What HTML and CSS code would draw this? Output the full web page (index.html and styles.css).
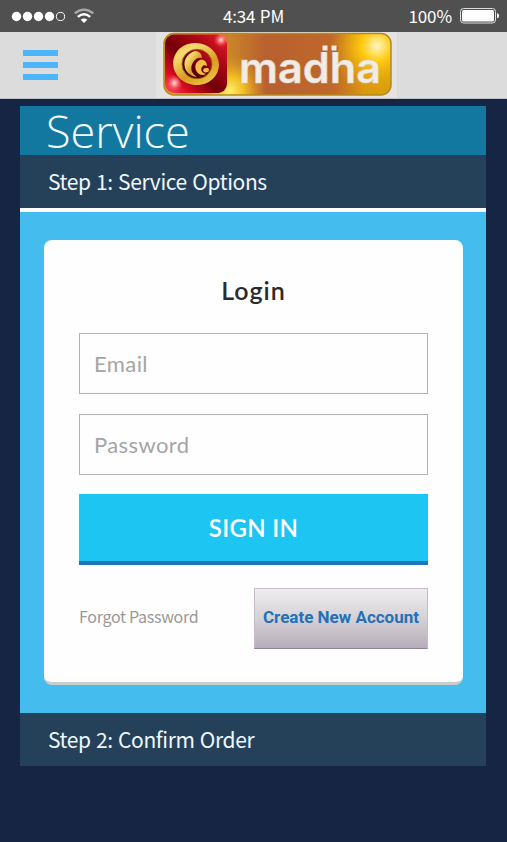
FILE: index.html
```html
<!DOCTYPE html>
<html lang="en">
<head>
    <meta charset="utf-8">
    <title>Service</title>
    <link rel="stylesheet" href="styles.css">
</head>
<body>
    <!-- status bar -->
    <div class="status">
        <svg class="signal" width="96" height="32" viewBox="0 0 96 32">
            <g fill="#fff">
                <circle cx="16.5" cy="16.5" r="4.7"/>
                <circle cx="27.5" cy="16.5" r="4.7"/>
                <circle cx="38.5" cy="16.5" r="4.7"/>
                <circle cx="49.5" cy="16.5" r="4.7"/>
            </g>
            <circle cx="60.5" cy="16.5" r="4.1" fill="none" stroke="#fff" stroke-width="1"/>
            <path d="M74.7 13.4Q84 5.8 93.3 13.4" fill="none" stroke="#aaa" stroke-width="2.2"/>
            <path d="M77.8 16.9Q84 11.7 90.2 16.9" fill="none" stroke="#fff" stroke-width="2.3"/>
            <path d="M80.7 19.8Q84 17.4 87.3 19.8L84 23Z" fill="#fff"/>
        </svg>
        <span class="time">4:34 PM</span>
        <div class="battery">
            <span>100%</span>
            <svg width="40" height="16" viewBox="0 0 40 16">
                <rect x=".5" y=".5" width="35" height="14.5" rx="3" fill="none" stroke="#ddd"/>
                <rect x="2" y="2" width="32" height="11.5" rx="1.5" fill="#fff"/>
                <path d="M37 5.2Q39.2 5.4 39.2 7.7T37 10.3Z" fill="#fff"/>
            </svg>
        </div>
    </div>

    <header class="topbar">
        <button class="menu" type="button" aria-label="Menu"><i></i><i></i><i></i></button>
        <svg class="logo" width="241" height="66" viewBox="156 32 241 66">
            <defs>
                <linearGradient id="plate" x1="0" y1="0" x2="1" y2="0">
                    <stop offset="0" stop-color="#e0a818"/>
                    <stop offset=".3" stop-color="#c98228"/>
                    <stop offset=".45" stop-color="#b8602f"/>
                    <stop offset=".75" stop-color="#bf682a"/>
                    <stop offset=".88" stop-color="#db9712"/>
                    <stop offset="1" stop-color="#d9a10a"/>
                </linearGradient>
                <radialGradient id="shine" cx="377" cy="46" r="48" gradientUnits="userSpaceOnUse">
                    <stop offset="0" stop-color="#fff6c0"/>
                    <stop offset=".32" stop-color="#ffca10"/>
                    <stop offset="1" stop-color="#e09a10" stop-opacity="0"/>
                </radialGradient>
                <radialGradient id="glow" cx="229" cy="91" r="38" gradientUnits="userSpaceOnUse">
                    <stop offset="0" stop-color="#fff06a"/>
                    <stop offset=".4" stop-color="#f1bd22"/>
                    <stop offset="1" stop-color="#d08826" stop-opacity="0"/>
                </radialGradient>
                <linearGradient id="red" x1="0" y1="1" x2="1" y2="0">
                    <stop offset="0" stop-color="#f9506a"/>
                    <stop offset=".2" stop-color="#d80b24"/>
                    <stop offset=".45" stop-color="#720008"/>
                    <stop offset=".7" stop-color="#a80714"/>
                    <stop offset=".92" stop-color="#d81624"/>
                    <stop offset="1" stop-color="#ffc0b8"/>
                </linearGradient>
                <linearGradient id="gold" x1="0" y1="0" x2="1" y2="1">
                    <stop offset="0" stop-color="#e5b63c"/>
                    <stop offset=".25" stop-color="#f6dc70"/>
                    <stop offset=".6" stop-color="#d99b20"/>
                    <stop offset="1" stop-color="#f5d650"/>
                </linearGradient>
                <linearGradient id="core" x1="0" y1="1" x2="1" y2="0">
                    <stop offset="0" stop-color="#380004"/>
                    <stop offset=".5" stop-color="#6e0008"/>
                    <stop offset="1" stop-color="#dc1424"/>
                </linearGradient>
                <radialGradient id="spot">
                    <stop offset="0" stop-color="#ffe8e4"/>
                    <stop offset=".3" stop-color="#ff9c9c" stop-opacity=".8"/>
                    <stop offset="1" stop-color="#f22" stop-opacity="0"/>
                </radialGradient>
            </defs>
            <rect x="156" y="32" width="241" height="66" fill="#e4e3e2"/>
            <rect x="164" y="33.5" width="227" height="61.5" rx="10" fill="url(#plate)"/>
            <rect x="164" y="33.5" width="227" height="61.5" rx="10" fill="url(#glow)"/>
            <rect x="164" y="33.5" width="227" height="61.5" rx="10" fill="url(#shine)"/>
            <rect x="164" y="33.5" width="227" height="61.5" rx="10" fill="none" stroke="#b28a1e" stroke-width="1.5"/>
            <rect x="165" y="34.5" width="62" height="58.5" rx="9" fill="url(#red)"/>
            <circle cx="221" cy="40" r="8" fill="url(#spot)"/>
            <path d="M165 73Q171 73 178 78Q183 84 184 93H174Q165 93 165 84Z" fill="url(#spot)"/>
            <ellipse cx="196" cy="64" rx="23" ry="21" fill="url(#gold)" transform="rotate(12 196 64)"/>
            <ellipse cx="197" cy="64" rx="15" ry="14.7" fill="url(#core)" stroke="#9c6413" stroke-width=".8"/>
            <path d="M195 51C188 53 184 59 184.500 65C185 72 190 76 197 77C190 73 190 66 194 61C196 58 199 57 202 58C202 54 199 51 195 51Z" fill="url(#gold)"/>
            <path d="M200 60C195 62 194 68 197 72C199 75 203 76 206 74C202 73 200 70 202 67C203 65 205 65 207 66C207 62 204 59 200 60ZM206 68C203 68 202 71 205 72.500L208 72Q210 70 208 68Z" fill="#f1bc48"/>
            <text class="logo-text" x="239" y="82.5" textLength="142" lengthAdjust="spacingAndGlyphs">madha</text>
            <!-- dots over the d and h stems -->
            <path d="M320 47h18v5h-18z" fill="#b8652e"/>
            <path d="M322.500 45.500h5v5h-5zM331.500 45.500h5v5h-5z" fill="#f1ece6"/>
        </svg>
    </header>

    <main class="panel">
        <h1>Service</h1>
        <h2>Step 1: Service Options</h2>
        <div class="content">
            <form class="login">
                <h3>Login</h3>
                <input type="text" placeholder="Email">
                <input type="password" placeholder="Password">
                <button class="signin" type="button">SIGN IN</button>
                <div class="links">
                    <a class="forgot">Forgot Password</a>
                    <button class="create" type="button">Create New Account</button>
                </div>
            </form>
        </div>
        <h2 class="last">Step 2: Confirm Order</h2>
    </main>
</body>
</html>
```
FILE: styles.css
```css
* {
    box-sizing: border-box;
}

body {
    margin: 0;
    height: 842px;
    background: #162544;
    font-family: "Noto Sans CJK SC", sans-serif;
    overflow: hidden;
}

h1, h2, h3 {
    margin: 0;
    font-weight: 400;
}

button {
    border: 0;
    padding: 0;
}

.status {
    display: grid;
    grid-template-columns: 1fr auto 1fr;
    align-items: center;
    height: 32px;
    background: #505050;
    color: #fff;
}

.time {
    font-size: 17px;
    line-height: 30px;
    word-spacing: 1px;
    letter-spacing: -.2px;
}

.battery {
    display: flex;
    justify-content: flex-end;
    align-items: center;
    gap: 8px;
    padding-right: 7px;
    font-size: 17px;
    line-height: 32px;
    letter-spacing: -.1px;
}

.topbar {
    display: flex;
    height: 67px;
    padding-left: 23px;
    background: #dcdcdc;
    border-bottom: 1px solid #bfc0c3;
}

.menu {
    display: flex;
    flex-direction: column;
    gap: 6px;
    width: 35px;
    margin: 18px 98px 0 0;
    background: none;
}

.menu i {
    width: 35px;
    height: 6px;
    background: #4db5fa;
}

.logo-text {
    font: 600 42px Inter, sans-serif;
    fill: #f1ece6;
    stroke: #e0d6ca;
    stroke-width: .6px;
}

.panel {
    margin: 7px 21px 0 20px;
}

.panel h1 {
    height: 49px;
    padding-left: 26px;
    background: #12789f;
    color: #f2fbff;
    font: 300 45px/50px "Open Sans", sans-serif;
}

.panel h2 {
    height: 53px;
    padding-left: 28px;
    background: #244159;
    color: #f0f8ff;
    font-size: 21px;
    line-height: 52px;
    word-spacing: 1px;
    letter-spacing: -.38px;
}

.content {
    height: 505px;
    padding: 28px 23px 0 24px;
    border-top: 4px solid #fff;
    background: #45bcee;
}

.login {
    height: 445px;
    padding: 32px 35px 0;
    border-bottom: 3px solid #c9cdd0;
    border-radius: 8px;
    background: #fefefe;
}

.login h3 {
    height: 61px;
    color: #2b2b2b;
    font: 600 25px/37px Lato, sans-serif;
    letter-spacing: 1px;
    text-align: center;
}

.login input {
    display: block;
    width: 100%;
    height: 61px;
    margin-bottom: 20px;
    padding: 0 14px;
    border: 1px solid #b3b3b3;
    border-radius: 0;
    background: #fefefe;
    font: 22px Lato, sans-serif;
    letter-spacing: .4px;
}

.login input::placeholder {
    color: #a5a5a5;
}

.signin {
    display: block;
    width: 100%;
    height: 71px;
    margin-top: -1px;
    padding-bottom: 1px;
    border-bottom: 4px solid #2173bd;
    background: #1dc5f2;
    color: #fff;
    font: 600 24px Lato, sans-serif;
    letter-spacing: .3px;
}

.links {
    display: flex;
    justify-content: space-between;
    margin-top: 23px;
}

.forgot {
    color: #999;
    font-size: 16px;
    line-height: 57px;
    letter-spacing: -.3px;
}

.create {
    width: 174px;
    height: 61px;
    padding-bottom: 2px;
    border: 1px solid #cbb8cf;
    border-bottom-color: #8d8298;
    background: linear-gradient(#efeeef, #d5d1d5 50%, #b6aeb9);
    color: #2371b8;
    font: 700 17px/57px Roboto, sans-serif;
}
```
